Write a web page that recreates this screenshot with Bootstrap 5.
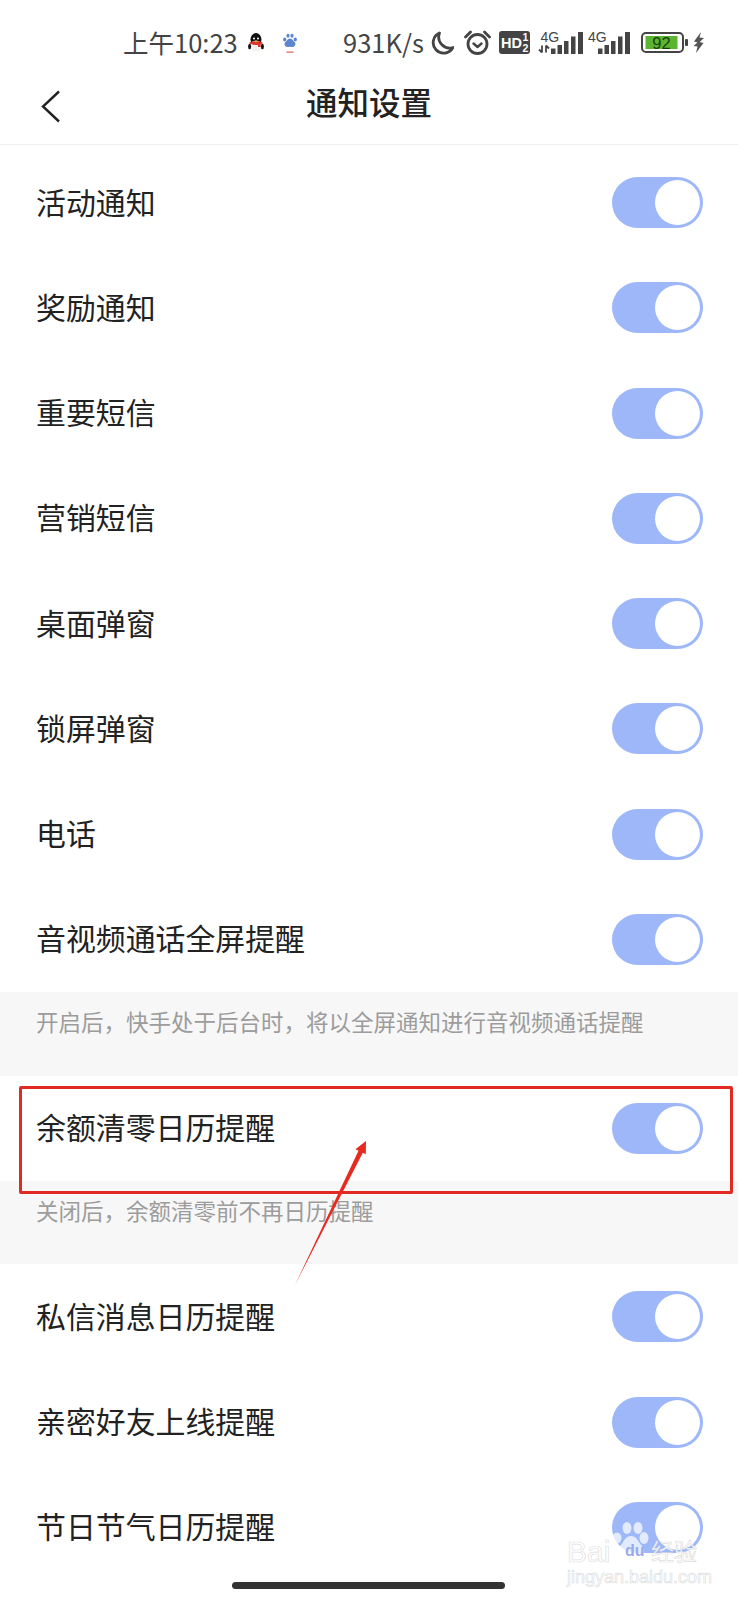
<!DOCTYPE html>
<html lang="zh-CN">
<head>
    <meta charset="UTF-8">
    <meta name="viewport" content="width=device-width, initial-scale=1.0">
    <title>通知设置</title>
    <link href="https://cdn.jsdelivr.net/npm/bootstrap@5.3.0/dist/css/bootstrap.min.css" rel="stylesheet">
    <style>
        html, body { height: 1600px; overflow: hidden; }
        body {
            position: relative;
            background: #fff;
            color: #222;
            font-family: "Noto Sans CJK SC", "Noto Sans", sans-serif;
        }

        /* status bar */
        .status-bar { height: 85px; padding: 0 0 0 123px; color: #444; font-size: 25.5px; line-height: 1; }
        .status-bar svg { display: block; flex: none; }
        .sb-label { margin-top: -2px; }
        .sb-time { width: 114px; white-space: nowrap; }
        .sb-qq { margin-left: 11px; }
        .sb-paw { margin-left: 19px; }
        .sb-speed { margin-left: 46px; width: 81px; white-space: nowrap; }
        .sb-moon { margin-left: 6px; }
        .sb-alarm { margin-left: 10px; }
        .sb-hd { margin-left: 8px; }
        .sb-sig1 { margin-left: 8px; }
        .sb-sig2 { margin-left: 4px; }
        .sb-batt { margin-left: 10px; }
        .sb-bolt { margin-left: 5px; }

        /* header */
        .page-head { height: 60px; padding-bottom: 26px; border-bottom: 1px solid #eee; }
        .page-title { font-size: 31.5px; font-weight: 500; line-height: 1; color: #222; margin: 0; }
        .back-btn { position: absolute; left: 41px; top: 90px; }

        /* rows */
        .settings-list { padding-top: 5px; }
        .setting-row { height: 105.25px; padding: 0 35px 0 36px; font-size: 29.9px; line-height: 1; }
        .row-label { margin-top: -2px; }
        .toggle-track { width: 91px; height: 51px; border-radius: 26px; background: #9db7f9; padding: 0 3px; flex: none; }
        .toggle-knob { width: 45px; height: 45px; border-radius: 50%; background: #fff; }
        .hint-band { height: 83.5px; background: #f7f7f7; padding: 13px 36px 0; color: #9c9c9c; font-size: 22.5px; line-height: 32px; }

        /* annotations over the screenshot */
        .red-box { position: absolute; left: 19px; top: 1086px; width: 714px; height: 108px; border: 3px solid #e02a22; border-radius: 2px; }
        .red-arrow { position: absolute; left: 0; top: 0; pointer-events: none; }
        .home-bar { position: absolute; left: 232px; top: 1582px; width: 273px; height: 7px; border-radius: 4px; background: #333; }

        /* watermark */
        .wm { position: absolute; left: 566px; top: 1518px; width: 140px; height: 70px; color: rgba(255,255,255,.9); }
        .wm-bai, .wm-du, .wm-jy, .wm-url { position: absolute; line-height: 1; white-space: nowrap; font-family: "Liberation Sans", sans-serif; -webkit-text-stroke: .7px rgba(190,190,190,.5); }
        .wm-bai { left: 1px; top: 19px; font-size: 30px; }
        .wm-du { left: 59px; top: 25px; font-size: 16px; font-weight: 700; color: rgba(140,160,235,.9); -webkit-text-stroke: 0; }
        .wm-jy { left: 85px; top: 21px; font-size: 23px; font-family: "Noto Sans CJK SC", sans-serif; }
        .wm-url { left: 1px; top: 50px; font-size: 18px; }
        .wm svg { position: absolute; left: 46px; top: 3px; }
    </style>
</head>
<body>

    <!-- Status bar -->
    <div class="status-bar d-flex align-items-center">
        <span class="sb-time sb-label">上午10:23</span>
        <svg class="sb-qq" width="16" height="19" viewBox="0 0 16 19">
            <ellipse cx="8" cy="6.5" rx="5.5" ry="6.5" fill="#111"/>
            <ellipse cx="8" cy="13" rx="6" ry="5.5" fill="#f4f1ec"/>
            <ellipse cx="8" cy="10" rx="6.6" ry="1.9" fill="#d8322a"/>
            <rect x="10" y="10" width="2.6" height="4" fill="#d8322a"/>
            <ellipse cx="1.6" cy="13.5" rx="1.5" ry="2.8" fill="#111"/>
            <ellipse cx="14.4" cy="13.5" rx="1.5" ry="2.8" fill="#111"/>
            <circle cx="6" cy="5.5" r="1" fill="#fff"/><circle cx="10" cy="5.5" r="1" fill="#fff"/>
            <path d="M5.5 8h5L8 9.4z" fill="#e9a825"/>
        </svg>
        <svg class="sb-paw" width="14" height="20" viewBox="0 0 14 20">
            <g fill="#5a86cf">
                <ellipse cx="1.7" cy="6.5" rx="1.6" ry="2"/><ellipse cx="5" cy="2.8" rx="1.6" ry="2"/>
                <ellipse cx="9" cy="2.8" rx="1.6" ry="2"/><ellipse cx="12.3" cy="6.5" rx="1.6" ry="2"/>
                <path d="M7 5.5c2.2 0 3 2.4 4.6 3.6 1.8 1.6.6 5-2 5-1 0-1.7-.4-2.6-.4s-1.6.4-2.6.4c-2.6 0-3.8-3.4-2-5C4 7.900 4.800 5.500 7 5.500z"/>
            </g>
            <rect x="3.500" y="18.500" width="7" height="1.300" fill="#d8705a"/>
        </svg>
        <span class="sb-speed sb-label">931K/s</span>
        <svg class="sb-moon" width="24" height="24" viewBox="0 0 24 24">
            <path d="M9.500 2A10.500 10.500 0 1 0 23 16.500 A11 11 0 0 1 9.500 2z" fill="none" stroke="#444" stroke-width="2.800" stroke-linejoin="round"/>
        </svg>
        <svg class="sb-alarm" width="27" height="25" viewBox="0 0 27 25">
            <circle cx="13.500" cy="14" r="9.500" fill="none" stroke="#444" stroke-width="2.800"/>
            <path d="M9.500 13.500l4 3.500 4-3.500" fill="none" stroke="#444" stroke-width="2.400" stroke-linecap="round" stroke-linejoin="round"/>
            <path d="M1.500 7L6.500 2M25.500 7L20.500 2" stroke="#444" stroke-width="2.800" stroke-linecap="round"/>
        </svg>
        <svg class="sb-hd" width="31" height="23" viewBox="0 0 31 23">
            <rect width="31" height="23" rx="3" fill="#444"/>
            <text x="2" y="16.500" font-family="Liberation Sans, sans-serif" font-size="14.500" font-weight="700" fill="#fff">HD</text>
            <text x="23.500" y="10" font-family="Liberation Sans, sans-serif" font-size="10.500" font-weight="700" fill="#fff">1</text>
            <text x="23.500" y="20.500" font-family="Liberation Sans, sans-serif" font-size="10.500" font-weight="700" fill="#fff">2</text>
        </svg>
        <svg class="sb-sig1" width="46" height="27" viewBox="0 -2 46 27">
            <text x="2.500" y="11" font-family="Liberation Sans, sans-serif" font-size="14" fill="#444">4G</text>
            <path d="M4 14.500v7M1 18.500L4 21.500M8 14.500v7M11 17.500L8 14.500" stroke="#444" stroke-width="1.800" fill="none"/>
            <g fill="#444"><rect x="13" y="17.500" width="4.500" height="5.500"/><rect x="19.500" y="14" width="4.500" height="9"/><rect x="26" y="10" width="4.500" height="13"/><rect x="33" y="5.500" width="4.500" height="17.500"/><rect x="40" y="1" width="5" height="22"/></g>
        </svg>
        <svg class="sb-sig2" width="43" height="27" viewBox="0 -2 43 27">
            <text x="0" y="11" font-family="Liberation Sans, sans-serif" font-size="14" fill="#444">4G</text>
            <g fill="#444"><rect x="10" y="17.500" width="4.500" height="5.500"/><rect x="16.500" y="14" width="4.500" height="9"/><rect x="23" y="10" width="4.500" height="13"/><rect x="30" y="5.500" width="4.500" height="17.500"/><rect x="37" y="1" width="5" height="22"/></g>
        </svg>
        <svg class="sb-batt" width="47" height="21" viewBox="0 0 47 21">
            <rect x="1" y="1" width="41" height="19" rx="4" fill="none" stroke="#444" stroke-width="2"/>
            <rect x="4.500" y="4" width="32" height="13" fill="#5cb531"/>
            <rect x="44" y="7" width="3" height="7" rx="1" fill="#444"/>
            <text x="20.500" y="16.500" text-anchor="middle" font-family="Liberation Sans, sans-serif" font-size="16.500" fill="#173f0c">92</text>
        </svg>
        <svg class="sb-bolt" width="11" height="21" viewBox="0 0 11 21">
            <path d="M8 0L1 9.500l3.500 1L0.500 14l4 .5L3 21l7.500-10-3.800-1L11 6 6.500 5.500z" fill="#555"/>
        </svg>
    </div>

    <!-- Header -->
    <header class="page-head d-flex justify-content-center align-items-center">
        <h1 class="page-title">通知设置</h1>
    </header>
    <svg class="back-btn" width="20" height="33" viewBox="0 0 20 33">
        <path d="M18 1.500L2 16.500l16 15" fill="none" stroke="#222" stroke-width="2.400"/>
    </svg>

    <!-- Settings -->
    <div class="settings-list">
        <div class="setting-row d-flex justify-content-between align-items-center"><span class="row-label">活动通知</span><span class="toggle-track d-flex justify-content-end align-items-center"><span class="toggle-knob"></span></span></div>
        <div class="setting-row d-flex justify-content-between align-items-center"><span class="row-label">奖励通知</span><span class="toggle-track d-flex justify-content-end align-items-center"><span class="toggle-knob"></span></span></div>
        <div class="setting-row d-flex justify-content-between align-items-center"><span class="row-label">重要短信</span><span class="toggle-track d-flex justify-content-end align-items-center"><span class="toggle-knob"></span></span></div>
        <div class="setting-row d-flex justify-content-between align-items-center"><span class="row-label">营销短信</span><span class="toggle-track d-flex justify-content-end align-items-center"><span class="toggle-knob"></span></span></div>
        <div class="setting-row d-flex justify-content-between align-items-center"><span class="row-label">桌面弹窗</span><span class="toggle-track d-flex justify-content-end align-items-center"><span class="toggle-knob"></span></span></div>
        <div class="setting-row d-flex justify-content-between align-items-center"><span class="row-label">锁屏弹窗</span><span class="toggle-track d-flex justify-content-end align-items-center"><span class="toggle-knob"></span></span></div>
        <div class="setting-row d-flex justify-content-between align-items-center"><span class="row-label">电话</span><span class="toggle-track d-flex justify-content-end align-items-center"><span class="toggle-knob"></span></span></div>
        <div class="setting-row d-flex justify-content-between align-items-center"><span class="row-label">音视频通话全屏提醒</span><span class="toggle-track d-flex justify-content-end align-items-center"><span class="toggle-knob"></span></span></div>
        <div class="hint-band">开启后，快手处于后台时，将以全屏通知进行音视频通话提醒</div>
        <div class="setting-row d-flex justify-content-between align-items-center"><span class="row-label">余额清零日历提醒</span><span class="toggle-track d-flex justify-content-end align-items-center"><span class="toggle-knob"></span></span></div>
        <div class="hint-band">关闭后，余额清零前不再日历提醒</div>
        <div class="setting-row d-flex justify-content-between align-items-center"><span class="row-label">私信消息日历提醒</span><span class="toggle-track d-flex justify-content-end align-items-center"><span class="toggle-knob"></span></span></div>
        <div class="setting-row d-flex justify-content-between align-items-center"><span class="row-label">亲密好友上线提醒</span><span class="toggle-track d-flex justify-content-end align-items-center"><span class="toggle-knob"></span></span></div>
        <div class="setting-row d-flex justify-content-between align-items-center"><span class="row-label">节日节气日历提醒</span><span class="toggle-track d-flex justify-content-end align-items-center"><span class="toggle-knob"></span></span></div>
    </div>

    <!-- Annotation -->
    <div class="red-box"></div>
    <svg class="red-arrow" width="738" height="1600" viewBox="0 0 738 1600">
        <polygon points="295,1285 358.500,1150.800 355.500,1149.300 366,1141 365.800,1154.300 362.800,1152.800" fill="#e8291f"/>
    </svg>

    <div class="home-bar"></div>

    <!-- Watermark -->
    <div class="wm">
        <svg width="42" height="44" viewBox="0 0 42 44">
            <g fill="rgba(255,255,255,.7)">
                <ellipse cx="15" cy="7" rx="4.500" ry="6"/><ellipse cx="26" cy="7" rx="4.500" ry="6"/>
                <ellipse cx="5" cy="17" rx="4.500" ry="5.500"/><ellipse cx="32" cy="17" rx="4.500" ry="6"/>
                <path d="M19 15c6 0 7 6 11 10 4 5 2 12-5 12-3 0-4-1-6-1s-3 1-6 1c-7 0-9-7-5-12 4-4 5-10 11-10z"/>
            </g>
        </svg>
        <span class="wm-bai">Bai</span>
        <span class="wm-du">du</span>
        <span class="wm-jy">经验</span>
        <span class="wm-url">jingyan.baidu.com</span>
    </div>

    <script src="https://cdn.jsdelivr.net/npm/bootstrap@5.3.0/dist/js/bootstrap.bundle.min.js"></script>
</body>
</html>
